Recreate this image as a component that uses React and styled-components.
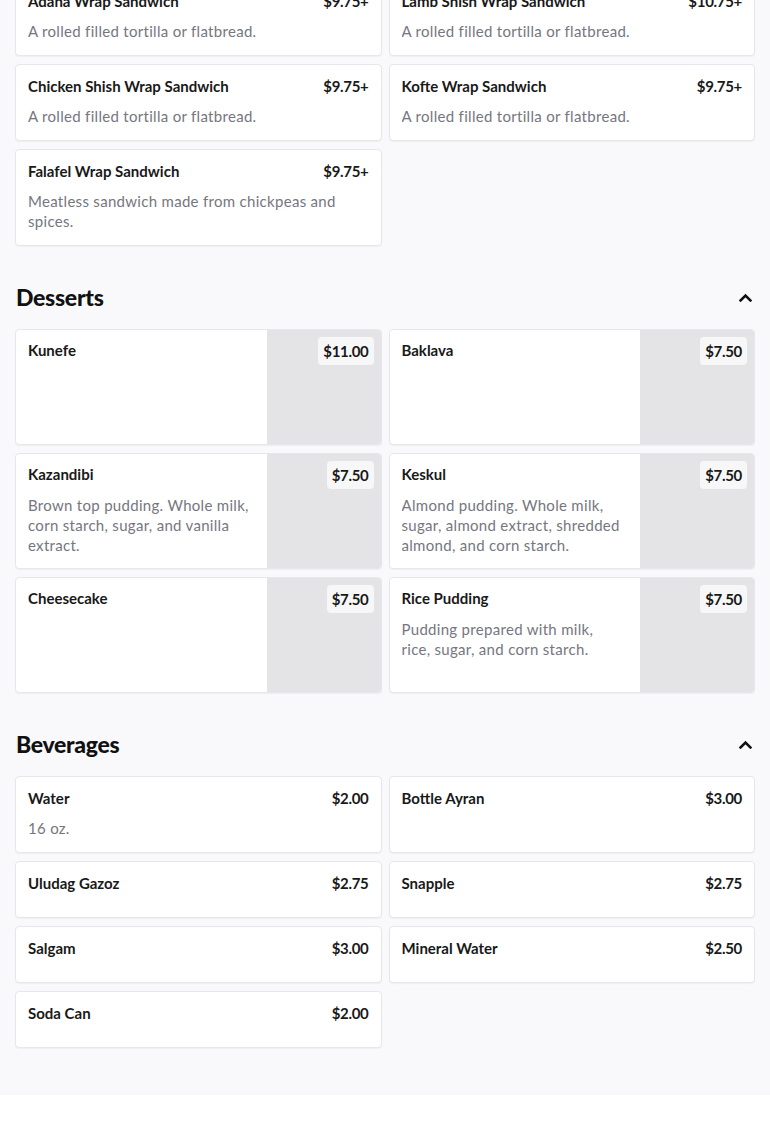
import React from "react";
import styled, { createGlobalStyle } from "styled-components";

const Global = createGlobalStyle`
  html, body { margin: 0; padding: 0; background: #ffffff; overflow: hidden; }
  body { font-family: "Lato", "Liberation Sans", sans-serif; color: #191919; }
  * { box-sizing: border-box; }
`;

const Page = styled.div`
  background: #f9f9fb;
  padding: 0 15px 47px 15px;
  overflow: hidden;
`;

const Scrolled = styled.div`
  margin-top: -21px;
`;

const Section = styled.section`
  margin-top: ${(p) => (p.$first ? "0" : "35px")};
`;

const Header = styled.div`
  display: flex;
  align-items: center;
  justify-content: space-between;
  height: 32px;
  margin-bottom: 16px;
  padding: 0 1px;
`;

const Heading = styled.h2`
  margin: 0;
  font-size: 23px;
  font-weight: 900;
  letter-spacing: -0.3px;
  color: #111;
`;

const Toggle = styled.button`
  border: 0;
  background: none;
  padding: 0;
  width: 16px;
  height: 16px;
  display: flex;
  align-items: center;
  justify-content: center;
  margin-right: 1px;
`;

const Grid = styled.div`
  display: grid;
  grid-template-columns: 1fr 1fr;
  gap: 8px 7px;
`;

const Card = styled.div`
  position: relative;
  display: flex;
  background: #ffffff;
  border: 1px solid #e6e6ec;
  border-radius: 4px;
  box-shadow: 0 1px 1px rgba(20, 20, 40, 0.04);
  overflow: hidden;
  min-height: ${(p) => (p.$image ? "116px" : "0")};
`;

const Body = styled.div`
  flex: 1;
  min-width: 0;
  padding: ${(p) => (p.$image ? "10px 16px 13px 12px" : "11px 12px 14px 12px")};
`;

const Title = styled.div`
  font-size: 15px;
  line-height: 20px;
  font-weight: 700;
  color: #191919;
  white-space: nowrap;
`;

const Desc = styled.div`
  margin-top: ${(p) => (p.$image ? "11px" : p.$empty ? "10px" : "10px")};
  font-size: 15px;
  line-height: 20px;
  color: #767680;
  letter-spacing: 0.3px;
  display: -webkit-box;
  -webkit-line-clamp: 3;
  -webkit-box-orient: vertical;
  overflow: hidden;
`;

const Photo = styled.div`
  flex: 0 0 115px;
  align-self: stretch;
  background: #e4e4e7;
  margin: -1px -1px -1px 0;
`;

const Price = styled.span`
  position: absolute;
  top: 7px;
  right: 7px;
  height: 28px;
  padding: 0 5px;
  display: flex;
  align-items: center;
  font-size: 15px;
  font-weight: 700;
  letter-spacing: -0.3px;
  color: #191919;
  border-radius: 4px;
  background: ${(p) => (p.$badge ? "#f7f7f8" : "transparent")};
`;

const Chevron = () => (
  <svg width="13" height="9" viewBox="0 0 13 9" fill="none">
    <path d="M1.6 7.4 L6.5 2.5 L11.4 7.4" stroke="#111" strokeWidth="2.6" strokeLinecap="square" />
  </svg>
);

const wraps = [
  { t: "Adana Wrap Sandwich", p: "$9.75+", d: "A rolled filled tortilla or flatbread." },
  { t: "Lamb Shish Wrap Sandwich", p: "$10.75+", d: "A rolled filled tortilla or flatbread." },
  { t: "Chicken Shish Wrap Sandwich", p: "$9.75+", d: "A rolled filled tortilla or flatbread." },
  { t: "Kofte Wrap Sandwich", p: "$9.75+", d: "A rolled filled tortilla or flatbread." },
  { t: "Falafel Wrap Sandwich", p: "$9.75+", d: "Meatless sandwich made from chickpeas and spices." },
];

const desserts = [
  { t: "Kunefe", p: "$11.00" },
  { t: "Baklava", p: "$7.50" },
  { t: "Kazandibi", p: "$7.50", d: "Brown top pudding. Whole milk, corn starch, sugar, and vanilla extract." },
  { t: "Keskul", p: "$7.50", d: "Almond pudding. Whole milk, sugar, almond extract, shredded almond, and corn starch." },
  { t: "Cheesecake", p: "$7.50" },
  { t: "Rice Pudding", p: "$7.50", d: "Pudding prepared with milk, rice, sugar, and corn starch." },
];

const beverages = [
  { t: "Water", p: "$2.00", d: "16 oz." },
  { t: "Bottle Ayran", p: "$3.00" },
  { t: "Uludag Gazoz", p: "$2.75" },
  { t: "Snapple", p: "$2.75" },
  { t: "Salgam", p: "$3.00" },
  { t: "Mineral Water", p: "$2.50" },
  { t: "Soda Can", p: "$2.00" },
];

const Item = ({ item, image }) => (
  <Card $image={image}>
    <Body $image={image}>
      <Title>{item.t}</Title>
      {item.d ? <Desc $image={image}>{item.d}</Desc> : !image && <Desc $empty />}
    </Body>
    {image && <Photo />}
    <Price $badge={image}>{item.p}</Price>
  </Card>
);

const MenuSection = ({ title, items, image }) => (
  <Section>
    <Header>
      <Heading>{title}</Heading>
      <Toggle aria-label="collapse">
        <Chevron />
      </Toggle>
    </Header>
    <Grid>
      {items.map((it) => (
        <Item key={it.t} item={it} image={image} />
      ))}
    </Grid>
  </Section>
);

export default function App() {
  return (
    <>
      <Global />
      <Page>
        <Scrolled>
          <Section $first>
            <Grid>
              {wraps.map((it) => (
                <Item key={it.t} item={it} />
              ))}
            </Grid>
          </Section>
        </Scrolled>
        <MenuSection title="Desserts" items={desserts} image />
        <MenuSection title="Beverages" items={beverages} />
      </Page>
    </>
  );
}
